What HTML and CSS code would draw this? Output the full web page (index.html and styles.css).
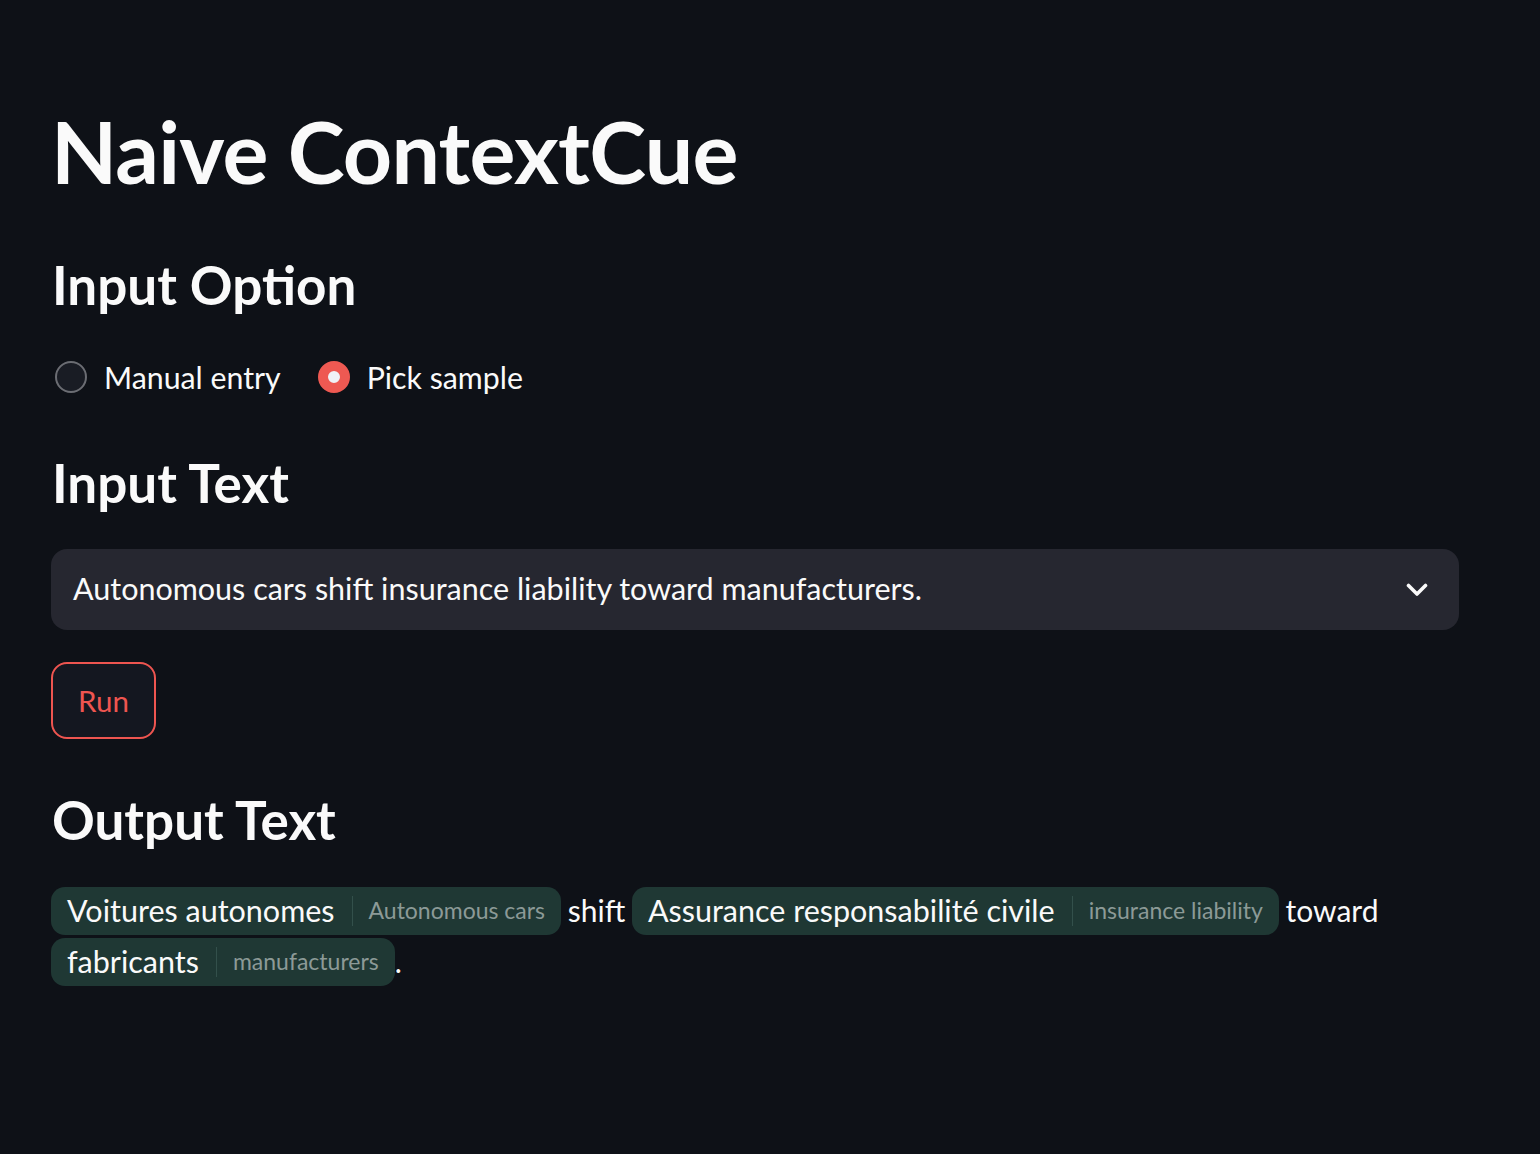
FILE: index.html
```html
<!DOCTYPE html>
<html lang="en">
<head>
<meta charset="utf-8">
<title>Naive ContextCue</title>
<link rel="stylesheet" href="styles.css">
</head>
<body>
<main class="app">
  <h1 class="title">Naive ContextCue</h1>

  <h2 class="section">Input Option</h2>
  <div class="radio-group" role="radiogroup">
    <label class="radio">
      <span class="radio-dot"></span>
      <span class="radio-label">Manual entry</span>
    </label>
    <label class="radio radio-checked">
      <span class="radio-dot"></span>
      <span class="radio-label">Pick sample</span>
    </label>
  </div>

  <h2 class="section">Input Text</h2>
  <div class="select">
    <span class="select-value">Autonomous cars shift insurance liability toward manufacturers.</span>
    <svg class="chevron" width="22" height="14" viewBox="0 0 22 14" aria-hidden="true">
      <path d="M2.5 2.5 L11 11 L19.5 2.5" fill="none" stroke="#fafafa" stroke-width="3.6" stroke-linecap="round" stroke-linejoin="round"/>
    </svg>
  </div>

  <button class="run">Run</button>

  <h2 class="section">Output Text</h2>
  <p class="annotated"><span class="chip">Voitures autonomes<span class="chip-label">Autonomous cars</span></span> shift <span class="chip">Assurance responsabilité civile<span class="chip-label">insurance liability</span></span> toward <span class="chip">fabricants<span class="chip-label">manufacturers</span></span>.</p>
</main>
</body>
</html>
```

FILE: styles.css
```css
html, body {
  margin: 0;
  padding: 0;
  background: #0e1117;
  color: #fafafa;
  font-family: "Lato", "Liberation Sans", sans-serif;
}

.app {
  padding: 99px 0 80px 51px;
  width: 1408px;
}

.title {
  margin: 0;
  font-size: 86px;
  line-height: 1.2;
  font-weight: 700;
  letter-spacing: -0.8px;
}

.section {
  margin: 0;
  font-size: 53px;
  line-height: 1.2;
  font-weight: 700;
  padding-left: 1px;
}

.title + .section {
  margin-top: 51px;
}

.radio-group {
  display: flex;
  align-items: center;
  gap: 37px;
  height: 40px;
  margin-top: 40px;
  margin-bottom: 54px;
  padding-left: 4px;
}

.radio {
  display: flex;
  align-items: center;
  gap: 17px;
  font-size: 30.3px;
}

.radio-dot {
  box-sizing: border-box;
  width: 32px;
  height: 32px;
  border-radius: 50%;
  border: 2px solid #6b6d73;
  background: #191c24;
}

.radio-checked .radio-dot {
  border: 10px solid #ee5952;
  background: #f0f2f6;
}

.select {
  box-sizing: border-box;
  margin-top: 35px;
  height: 81px;
  border-radius: 16px;
  background: #262730;
  display: flex;
  align-items: center;
  justify-content: space-between;
  padding: 0 31px 0 22px;
  font-size: 30.5px;
}

.select-value {
  position: relative;
  top: -2px;
}

.chevron {
  display: block;
}

.run {
  display: block;
  box-sizing: border-box;
  margin-top: 32px;
  width: 105px;
  height: 77px;
  border: 2px solid #ee5550;
  border-radius: 16px;
  background: #141720;
  color: #ee5550;
  font-family: inherit;
  font-size: 29.5px;
  padding: 0;
}

.run + .section {
  margin-top: 49px;
}

.annotated {
  margin: 35px 0 0;
  font-size: 30px;
  line-height: 47px;
  word-spacing: -1px;
}

.chip {
  display: inline-block;
  vertical-align: top;
  height: 48px;
  line-height: 47px;
  margin: 0 0 3px 0;
  padding: 0 16px;
  border-radius: 14px;
  background: #1f3834;
  font-size: 30.5px;
  word-spacing: 0;
}

.chip-label {
  display: inline-block;
  vertical-align: top;
  height: 30px;
  line-height: 28px;
  margin: 9px 0 0 17px;
  padding-left: 16px;
  border-left: 1px solid #33504b;
  color: #8c9a97;
  font-size: 23px;
}
```
